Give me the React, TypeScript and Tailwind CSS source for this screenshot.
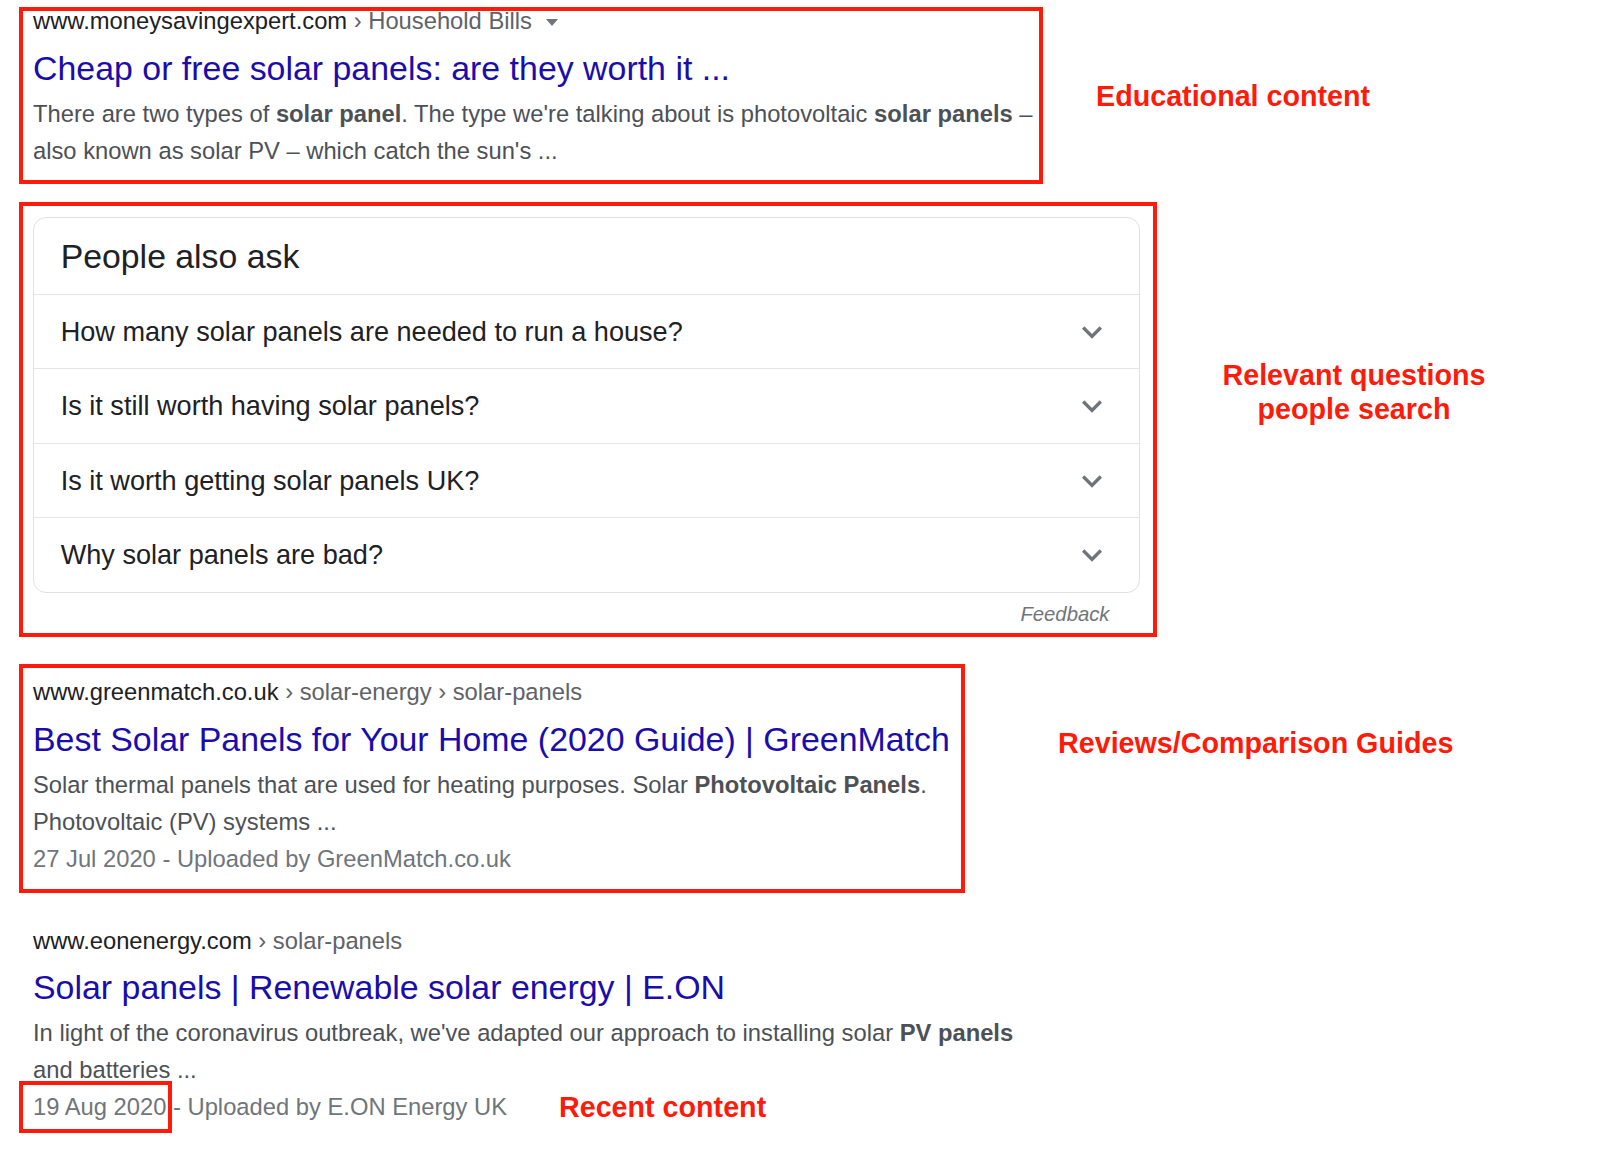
import type { ReactNode } from "react";

const RED = "border-[#ff1a0a]";

function Chevron() {
  return (
    <svg width="40" height="40" viewBox="0 0 24 24" className="shrink-0">
      <path fill="#70757a" d="M16.59 8.59L12 13.17 7.41 8.59 6 10l6 6 6-6z" />
    </svg>
  );
}

function UrlLine({ domain, crumbs, menu }: { domain: string; crumbs: string[]; menu?: boolean }) {
  return (
    <div className="flex items-center whitespace-pre text-[23.75px] leading-[20px]">
      <span className="text-[#202124]">{domain}</span>
      <span className="text-[#5f6368]">{crumbs.map((c) => ` › ${c}`).join("")}</span>
      {menu && (
        <svg width="12" height="7" viewBox="0 0 12 7" className="ml-[14px] mt-[2px]">
          <path d="M0 0h12L6 7z" fill="#70757a" />
        </svg>
      )}
    </div>
  );
}

function Title({ children }: { children: ReactNode }) {
  return (
    <div className="mt-[16.5px] whitespace-nowrap text-[33.9px] leading-[40px] text-[#1a0dab]">
      {children}
    </div>
  );
}

function Snippet({ children }: { children: ReactNode }) {
  return (
    <div className="mt-[7px] whitespace-nowrap text-[23.75px] leading-[37px] text-[#4d5156]">
      {children}
    </div>
  );
}

function Label({ children, className }: { children: ReactNode; className?: string }) {
  return (
    <div className={`whitespace-nowrap text-[28.7px] font-bold leading-[34px] text-[#ff1a0a] ${className ?? ""}`}>
      {children}
    </div>
  );
}

const questions = [
  "How many solar panels are needed to run a house?",
  "Is it still worth having solar panels?",
  "Is it worth getting solar panels UK?",
  "Why solar panels are bad?",
];

export default function App() {
  return (
    <div className="min-h-[1166px] w-[1600px] bg-white pl-[19px] pt-[7px] font-['Liberation_Sans',Arial,sans-serif]">
      {/* educational */}
      <div className="flex items-start">
        <div className={`w-[1024px] border-4 ${RED} pb-[11.5px] pl-[10px]`}>
          <UrlLine domain="www.moneysavingexpert.com" crumbs={["Household Bills"]} menu />
          <Title>Cheap or free solar panels: are they worth it ...</Title>
          <Snippet>
            There are two types of <b>solar panel</b>. The type we're talking about is photovoltaic{" "}
            <b>solar panels</b> –
            <br />
            also known as solar PV – which catch the sun's ...
          </Snippet>
        </div>
        <Label className="ml-[53px] mt-[72px]">Educational content</Label>
      </div>

      {/* people also ask */}
      <div className="mt-[17.5px] flex items-start">
        <div className={`w-[1138px] border-4 ${RED} pb-[5px] pl-[9.7px] pr-[13.5px] pt-[11.3px]`}>
          <div className="rounded-[13px] border border-[#dfe1e5] text-[#202124]">
            <div className="pl-[27px] text-[33.8px] leading-[76px]">People also ask</div>
            {questions.map((q) => (
              <div
                key={q}
                className="flex h-[74.5px] items-center justify-between border-t border-[#e4e5e8] pl-[27px] pr-[26.5px] text-[27.1px]"
              >
                <span className="mt-[1px]">{q}</span>
                <Chevron />
              </div>
            ))}
          </div>
          <div className="mt-[7.5px] pr-[30px] text-right text-[20.3px] italic leading-[28px] text-[#70757a]">
            Feedback
          </div>
        </div>
        <Label className="ml-[47px] mt-[156px] w-[300px] text-center">
          Relevant questions
          <br />
          people search
        </Label>
      </div>

      {/* reviews */}
      <div className="mt-[27px] flex items-start">
        <div className={`w-[946px] border-4 ${RED} pb-[12.5px] pl-[10px] pt-[14px]`}>
          <UrlLine domain="www.greenmatch.co.uk" crumbs={["solar-energy", "solar-panels"]} />
          <Title>Best Solar Panels for Your Home (2020 Guide) | GreenMatch</Title>
          <Snippet>
            Solar thermal panels that are used for heating purposes. Solar <b>Photovoltaic Panels</b>.
            <br />
            Photovoltaic (PV) systems ...
            <div className="text-[#70757a]">27 Jul 2020 - Uploaded by GreenMatch.co.uk</div>
          </Snippet>
        </div>
        <Label className="ml-[93px] mt-[62px]">Reviews/Comparison Guides</Label>
      </div>

      {/* recent */}
      <div className="mt-[37.5px] pl-[14px]">
        <UrlLine domain="www.eonenergy.com" crumbs={["solar-panels"]} />
        <Title>Solar panels | Renewable solar energy | E.ON</Title>
        <Snippet>
          In light of the coronavirus outbreak, we've adapted our approach to installing solar <b>PV panels</b>
          <br />
          and batteries ...
          <div className="relative flex items-start text-[#70757a]">
            <span>19 Aug 2020 - Uploaded by E.ON Energy UK</span>
            <Label className="ml-[52px] mt-[2px]">Recent content</Label>
            <div className={`absolute -left-[14px] -top-[7.5px] h-[52px] w-[153px] border-4 ${RED}`} />
          </div>
        </Snippet>
      </div>
    </div>
  );
}
